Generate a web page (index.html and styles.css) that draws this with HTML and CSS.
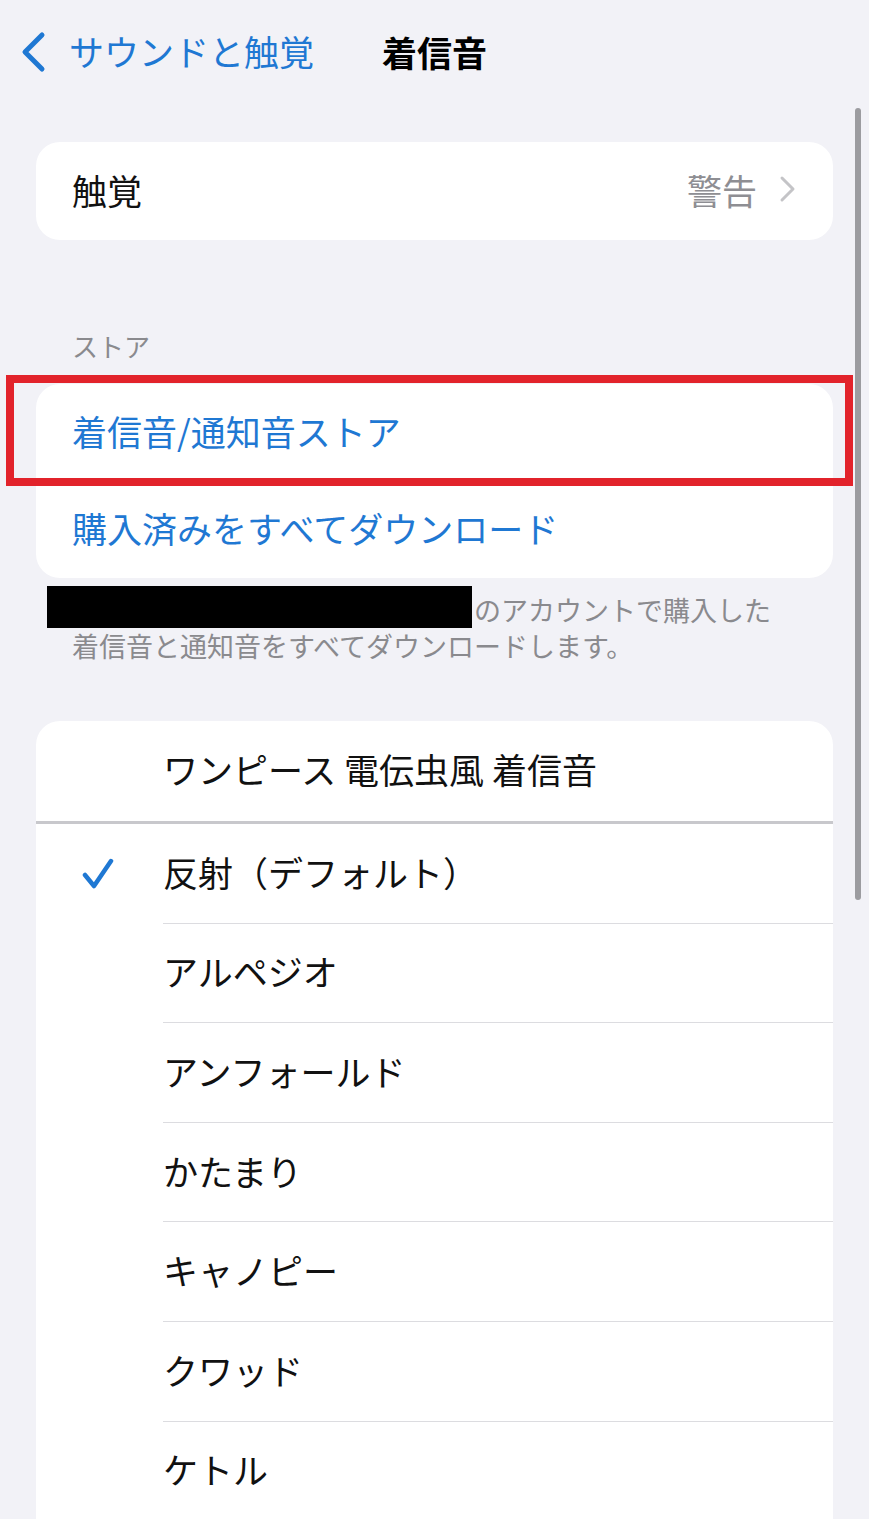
FILE: index.html
```html
<!DOCTYPE html>
<html lang="ja">

<head>
    <meta charset="UTF-8">
    <meta name="viewport" content="width=device-width, initial-scale=1.0">
    <title>着信音</title>
    <link rel="stylesheet" href="styles.css">
</head>

<body>
    <div class="navbar">
        <div class="nav-back">
            <svg class="back-icon" width="26" height="42" viewBox="0 0 26 42">
                <path d="M22 4 L5 21 L22 38" fill="none" stroke="#1f78d3" stroke-width="5" stroke-linecap="round" stroke-linejoin="round" />
            </svg>
            <span class="back-text">サウンドと触覚</span>
        </div>
        <div class="nav-title">着信音</div>
        <div></div>
    </div>

    <div class="content">
        <div class="card">
            <div class="row">
                <span class="label">触覚</span>
                <span class="value">警告
                    <svg class="chevron" width="18" height="28" viewBox="0 0 18 28">
                        <path d="M3 3 L14 14 L3 25" fill="none" stroke="#c4c4c7" stroke-width="3" stroke-linecap="round" stroke-linejoin="round" />
                    </svg>
                </span>
            </div>
        </div>

        <div class="section-header">ストア</div>
        <div class="card store-card">
            <div class="row link">着信音/通知音ストア</div>
            <div class="row link">購入済みをすべてダウンロード</div>
            <div class="highlight"></div>
        </div>
        <div class="section-footer">
            <span class="redacted"></span>のアカウントで購入した<br>着信音と通知音をすべてダウンロードします。
        </div>

        <div class="card tones">
            <div class="tone-top">ワンピース 電伝虫風 着信音</div>
            <div class="tone">
                <div class="check">
                    <svg width="32" height="31" viewBox="0 0 32 31">
                        <path d="M3 17 L12 28 L29 3" fill="none" stroke="#1f78d3" stroke-width="4.5" stroke-linecap="round" stroke-linejoin="round" />
                    </svg>
                </div>
                <div class="tone-label">反射（デフォルト）</div>
            </div>
            <div class="tone">
                <div class="check"></div>
                <div class="tone-label">アルペジオ</div>
            </div>
            <div class="tone">
                <div class="check"></div>
                <div class="tone-label">アンフォールド</div>
            </div>
            <div class="tone">
                <div class="check"></div>
                <div class="tone-label">かたまり</div>
            </div>
            <div class="tone">
                <div class="check"></div>
                <div class="tone-label">キャノピー</div>
            </div>
            <div class="tone">
                <div class="check"></div>
                <div class="tone-label">クワッド</div>
            </div>
            <div class="tone">
                <div class="check"></div>
                <div class="tone-label">ケトル</div>
            </div>
        </div>
    </div>

    <div class="scrollbar"></div>
</body>

</html>
```

FILE: styles.css
```css
* {
    box-sizing: border-box;
}

body {
    margin: 0;
    background-color: #f2f2f7;
    font-family: "Noto Sans CJK JP", "Noto Sans", sans-serif;
    color: #111;
    overflow: hidden;
}

.navbar {
    display: grid;
    grid-template-columns: 1fr auto 1fr;
    align-items: center;
    height: 104px;
}

.nav-back {
    display: flex;
    align-items: center;
    padding-left: 20px;
    gap: 23px;
}

.back-text {
    color: #1f78d3;
    font-size: 35px;
    line-height: 42px;
    padding-bottom: 2px;
}

.nav-title {
    font-size: 35px;
    font-weight: 700;
    color: #000;
    padding-bottom: 2px;
}

.content {
    padding-top: 38px;
}

.card {
    background: white;
    border-radius: 24px;
    margin: 0 36px;
}

.row {
    display: flex;
    align-items: center;
    justify-content: space-between;
    height: 97px;
    padding: 0 36px 4px;
    font-size: 35px;
}

.card:first-child .row {
    height: 98px;
}

.value {
    display: flex;
    align-items: center;
    gap: 22px;
    color: #8e8e93;
}

.section-header {
    margin: 88px 72px 20px;
    font-size: 26px;
    line-height: 36px;
    color: #8a8a8e;
}

.store-card {
    position: relative;
}

.link {
    color: #1f78d3;
}

.highlight {
    position: absolute;
    left: -30px;
    top: -9px;
    width: 847px;
    height: 111px;
    border: 8px solid #e2232b;
}

.section-footer {
    margin: 14px 72px 58px;
    font-size: 27px;
    line-height: 35px;
    color: #8a8a8e;
}

.redacted {
    display: inline-block;
    width: 425px;
    height: 42px;
    margin: -7px 2px 0 -25px;
    vertical-align: -7px;
    background: #000;
}

.tones {
    padding-bottom: 60px;
}

.tone-top {
    display: flex;
    align-items: center;
    height: 103px;
    padding: 0 0 6px 127px;
    font-size: 35px;
    border-bottom: 3px solid #c8c8cc;
}

.tone {
    display: flex;
}

.check {
    width: 127px;
    display: flex;
    align-items: center;
    padding-left: 46px;
}

.tone-label {
    flex: 1;
    display: flex;
    align-items: center;
    height: 99.6px;
    padding-bottom: 4px;
    font-size: 35px;
    border-bottom: 1px solid #dcdce0;
}

.scrollbar {
    position: fixed;
    right: 8px;
    top: 108px;
    width: 6px;
    height: 792px;
    border-radius: 3px;
    background: #9c9ca0;
}
```
